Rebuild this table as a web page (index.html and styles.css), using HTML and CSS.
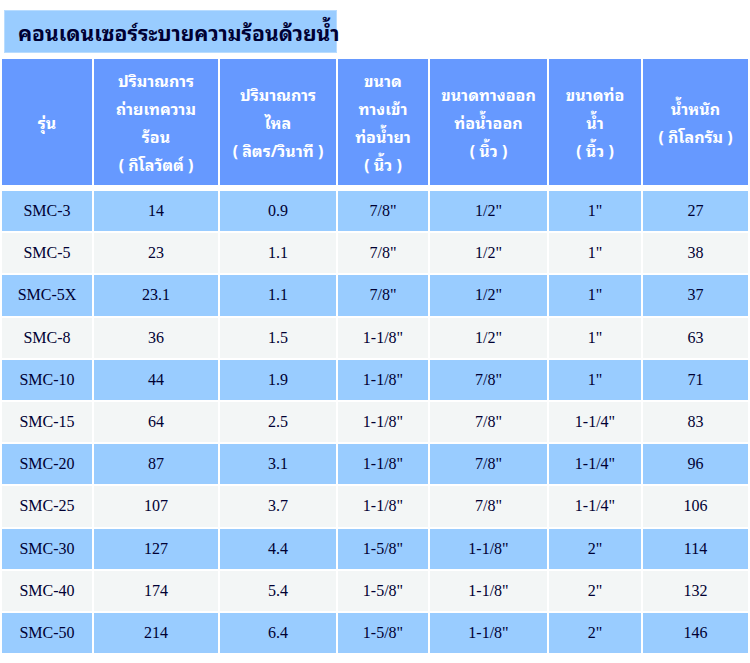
FILE: index.html
```html
<!DOCTYPE html>
<html lang="th">
<head>
<meta charset="utf-8">
<link rel="stylesheet" href="styles.css">
</head>
<body>
<div class="title">คอนเดนเซอร์ระบายความร้อนด้วยน้ำ</div>
<table class="spec">
  <colgroup>
    <col class="c1"><col class="c2"><col class="c3"><col class="c4"><col class="c5"><col class="c6"><col class="c7">
  </colgroup>
  <thead>
    <tr>
      <th>รุ่น</th>
      <th>ปริมาณการ<br>ถ่ายเทความ<br>ร้อน<br>( กิโลวัตต์ )</th>
      <th>ปริมาณการ<br>ไหล<br>( ลิตร/วินาที )</th>
      <th>ขนาด<br>ทางเข้า<br>ท่อน้ำยา<br>( นิ้ว )</th>
      <th>ขนาดทางออก<br>ท่อน้ำออก<br>( นิ้ว )</th>
      <th>ขนาดท่อ<br>น้ำ<br>( นิ้ว )</th>
      <th>น้ำหนัก<br>( กิโลกรัม )</th>
    </tr>
  </thead>
  <tbody>
    <tr class="blue"><td>SMC-3</td><td>14</td><td>0.9</td><td>7/8"</td><td>1/2"</td><td>1"</td><td>27</td></tr>
    <tr class="gray"><td>SMC-5</td><td>23</td><td>1.1</td><td>7/8"</td><td>1/2"</td><td>1"</td><td>38</td></tr>
    <tr class="blue"><td>SMC-5X</td><td>23.1</td><td>1.1</td><td>7/8"</td><td>1/2"</td><td>1"</td><td>37</td></tr>
    <tr class="gray"><td>SMC-8</td><td>36</td><td>1.5</td><td>1-1/8"</td><td>1/2"</td><td>1"</td><td>63</td></tr>
    <tr class="blue"><td>SMC-10</td><td>44</td><td>1.9</td><td>1-1/8"</td><td>7/8"</td><td>1"</td><td>71</td></tr>
    <tr class="gray"><td>SMC-15</td><td>64</td><td>2.5</td><td>1-1/8"</td><td>7/8"</td><td>1-1/4"</td><td>83</td></tr>
    <tr class="blue"><td>SMC-20</td><td>87</td><td>3.1</td><td>1-1/8"</td><td>7/8"</td><td>1-1/4"</td><td>96</td></tr>
    <tr class="gray"><td>SMC-25</td><td>107</td><td>3.7</td><td>1-1/8"</td><td>7/8"</td><td>1-1/4"</td><td>106</td></tr>
    <tr class="blue"><td>SMC-30</td><td>127</td><td>4.4</td><td>1-5/8"</td><td>1-1/8"</td><td>2"</td><td>114</td></tr>
    <tr class="gray"><td>SMC-40</td><td>174</td><td>5.4</td><td>1-5/8"</td><td>1-1/8"</td><td>2"</td><td>132</td></tr>
    <tr class="blue"><td>SMC-50</td><td>214</td><td>6.4</td><td>1-5/8"</td><td>1-1/8"</td><td>2"</td><td>146</td></tr>
  </tbody>
</table>
</body>
</html>
```
FILE: styles.css
```css
html, body {
  margin: 0;
  padding: 0;
  background: #ffffff;
}

.title {
  box-sizing: border-box;
  margin: 10px 0 0 4px;
  width: 333px;
  height: 43px;
  padding-left: 13px;
  background: #99ccff;
  border: 1px solid #b8dcff;
  color: #000033;
  font-family: "Tahoma", "Noto Sans Thai Looped", "Garuda", "Loma", "Norasi", "Noto Sans Thai", "Noto Sans", sans-serif;
  font-weight: bold;
  font-size: 21px;
  line-height: 41px;
  white-space: nowrap;
}

.spec {
  margin-top: 4px;
  width: 750px;
  table-layout: fixed;
  border-collapse: separate;
  border-spacing: 2px;
}

.c1 { width: 90px; }
.c2 { width: 124px; }
.c3 { width: 116px; }
.c4 { width: 90px; }
.c5 { width: 117px; }
.c6 { width: 92px; }
.c7 { width: 105px; }

.spec th {
  box-sizing: border-box;
  height: 130px;
  padding: 0 2px;
  background: #6699ff;
  background-clip: padding-box;
  border-bottom: 4px solid transparent;
  color: #ffffff;
  font-family: "Tahoma", "Noto Sans Thai Looped", "Garuda", "Loma", "Norasi", "Noto Sans Thai", "Noto Sans", sans-serif;
  font-weight: bold;
  font-size: 16px;
  line-height: 28px;
  text-align: center;
  vertical-align: middle;
}

.spec td {
  height: 40.2px;
  padding: 0;
  color: #000033;
  font-family: "Liberation Serif", "Times New Roman", serif;
  font-size: 16px;
  text-align: center;
  vertical-align: middle;
}

.blue td { background: #99ccff; }
.gray td { background: #f3f6f6; }
```
